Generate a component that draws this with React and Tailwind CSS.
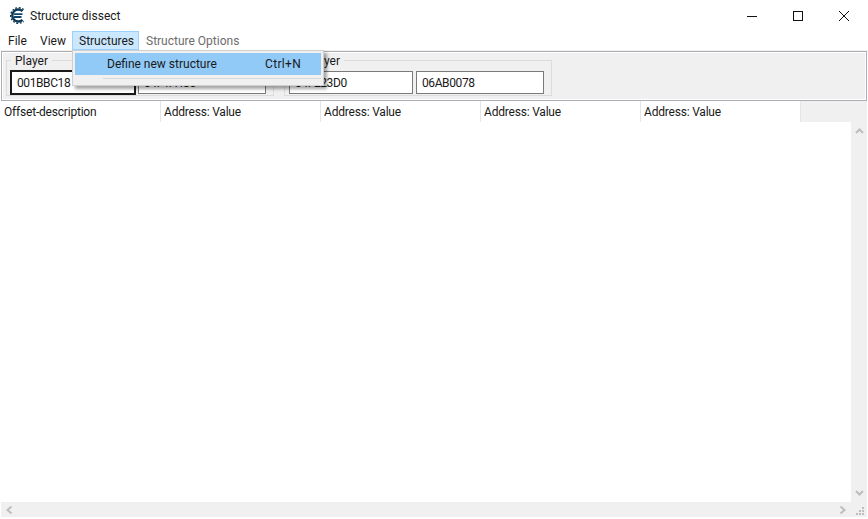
import React from "react";

const Columns = ["Offset-description", "Address: Value", "Address: Value", "Address: Value", "Address: Value"];

const AppIcon = () => (
  <svg width="17" height="17" viewBox="0 0 17 17" fill="none">
    <path d="M13.5 4.2 A6 6 0 1 0 13.5 12.8" stroke="#0f3a55" strokeWidth="2.4" />
    <path d="M14.6 2.6 A7.8 7.8 0 1 0 14.6 14.4" stroke="#0f3a55" strokeWidth="1.4" strokeDasharray="1.8 1.6" />
    <path d="M5 7.2 H13.5 M5 10 H12.5" stroke="#14486a" strokeWidth="1.8" />
  </svg>
);

const GroupBox = ({ title, titleClass, children }) => (
  <div className="relative h-[36px] w-[268px] border border-[#dcdcdc]">
    <span className={`absolute -top-[7px] bg-[#f0f0f0] px-[4px] leading-[14px] ${titleClass}`}>{title}</span>
    <div className="flex pl-[4px] pt-[10px]">{children}</div>
  </div>
);

const AddressInput = ({ value, className }) => (
  <div className={`flex items-center bg-white pl-[5px] tracking-[-0.4px] ${className}`}>{value}</div>
);

export default function App() {
  return (
    <div className="relative h-[519px] w-[868px] overflow-hidden bg-white text-[12px] text-[#1a1a1a] [font-family:Roboto,sans-serif]">
      {/* Title bar */}
      <div className="flex h-[31px] items-center pl-[9px] pr-[1px]">
        <AppIcon />
        <span className="ml-[4px]">Structure dissect</span>
        <div className="ml-auto flex items-center">
          <svg width="46" height="30" viewBox="0 0 46 30" stroke="#111" fill="none"><path d="M18 15.5 H28" /></svg>
          <svg width="46" height="30" viewBox="0 0 46 30" stroke="#111" fill="none"><rect x="18.5" y="10.5" width="9" height="9" /></svg>
          <svg width="46" height="30" viewBox="0 0 46 30" stroke="#111" fill="none"><path d="M18 10 L28 20 M28 10 L18 20" /></svg>
        </div>
      </div>

      {/* Menu bar */}
      <div className="flex h-[20px] items-center border-b border-[#f0f0f0]">
        <span className="w-[33px] pl-[8px]">File</span>
        <span className="w-[39px] pl-[7px]">View</span>
        <span className="flex h-[19px] w-[67px] items-center border border-[#99d1ff] bg-[#cce8ff] pl-[6px]">Structures</span>
        <span className="pl-[7px] text-[#6d6d6d]">Structure Options</span>
      </div>

      <div className="mx-[1px] h-[466px]">
        {/* Address groups */}
        <div className="h-[50px] border border-[#adadb4]">
          <div className="flex h-[48px] gap-[10px] border border-white bg-[#f0f0f0] pl-[3px] pt-[7px]">
            <GroupBox title="Player" titleClass="left-[4px]">
              <AddressInput value="001BBC18" className="-mt-[1px] -ml-[1px] h-[25px] w-[126px] border-2 border-[#1a1a1a]" />
              <AddressInput value="04F1A480" className="ml-[2px] h-[23px] w-[128px] border border-[#7a7a7a]" />
            </GroupBox>
            <GroupBox title="Player" titleClass="left-[18px]">
              <AddressInput value="04F223D0" className="h-[23px] w-[124px] border border-[#7a7a7a]" />
              <AddressInput value="06AB0078" className="ml-[3px] h-[23px] w-[128px] border border-[#7a7a7a]" />
            </GroupBox>
          </div>
        </div>

        {/* Column headers */}
        <div className="flex h-[21px] bg-[#f0f0f0]">
          <div className="flex bg-white">
            {Columns.map((col, i) => (
              <div key={i} className="flex h-[21px] w-[160px] items-center border-r border-[#e5e5e5] pl-[3px] tracking-[-0.2px]">{col}</div>
            ))}
          </div>
        </div>

        {/* List with scrollbars */}
        <div className="flex h-[380px]">
          <div className="flex-1 bg-white" />
          <div className="flex w-[16px] flex-col items-center justify-between bg-[#f0f0f0] py-[6px]">
            <svg width="9" height="6" viewBox="0 0 9 6" stroke="#bdbdbd" strokeWidth="2" fill="none"><path d="M1 5 L4.5 1.5 L8 5" /></svg>
            <svg width="9" height="6" viewBox="0 0 9 6" stroke="#bdbdbd" strokeWidth="2" fill="none"><path d="M1 1 L4.5 4.5 L8 1" /></svg>
          </div>
        </div>
        <div className="flex h-[15px] items-center justify-between bg-[#f0f0f0] pl-[5px] pr-[2px]">
          <svg width="7" height="8" viewBox="0 0 7 8" stroke="#bdbdbd" strokeWidth="2" fill="none"><path d="M5.5 0.5 L1.5 4 L5.5 7.5" /></svg>
          <div className="flex items-center gap-[10px]">
            <svg width="7" height="8" viewBox="0 0 7 8" stroke="#bdbdbd" strokeWidth="2" fill="none"><path d="M1.5 0.5 L5.5 4 L1.5 7.5" /></svg>
            <svg className="mt-[4px]" width="9" height="9" viewBox="0 0 9 9" fill="#bdbdbd"><rect x="6" y="0" width="2" height="2" /><rect x="3" y="3" width="2" height="2" /><rect x="6" y="3" width="2" height="2" /><rect x="0" y="6" width="2" height="2" /><rect x="3" y="6" width="2" height="2" /><rect x="6" y="6" width="2" height="2" /></svg>
          </div>
        </div>
      </div>

      {/* Open dropdown */}
      <div className="absolute left-[72px] top-[50px] w-[252px] border border-[#cfcfcf] bg-[#f0f0f0] p-[2px] shadow-[3px_3px_3px_rgba(0,0,0,0.35)]">
        <div className="flex h-[22px] items-center justify-between bg-[#91c9f7] pl-[32px] pr-[20px]">
          <span>Define new structure</span>
          <span className="tracking-[0.3px]">Ctrl+N</span>
        </div>
        <div className="ml-[28px] mt-[3px] h-[1px] bg-[#d7d7d7]" />
        <div className="h-[4px]" />
      </div>
    </div>
  );
}
